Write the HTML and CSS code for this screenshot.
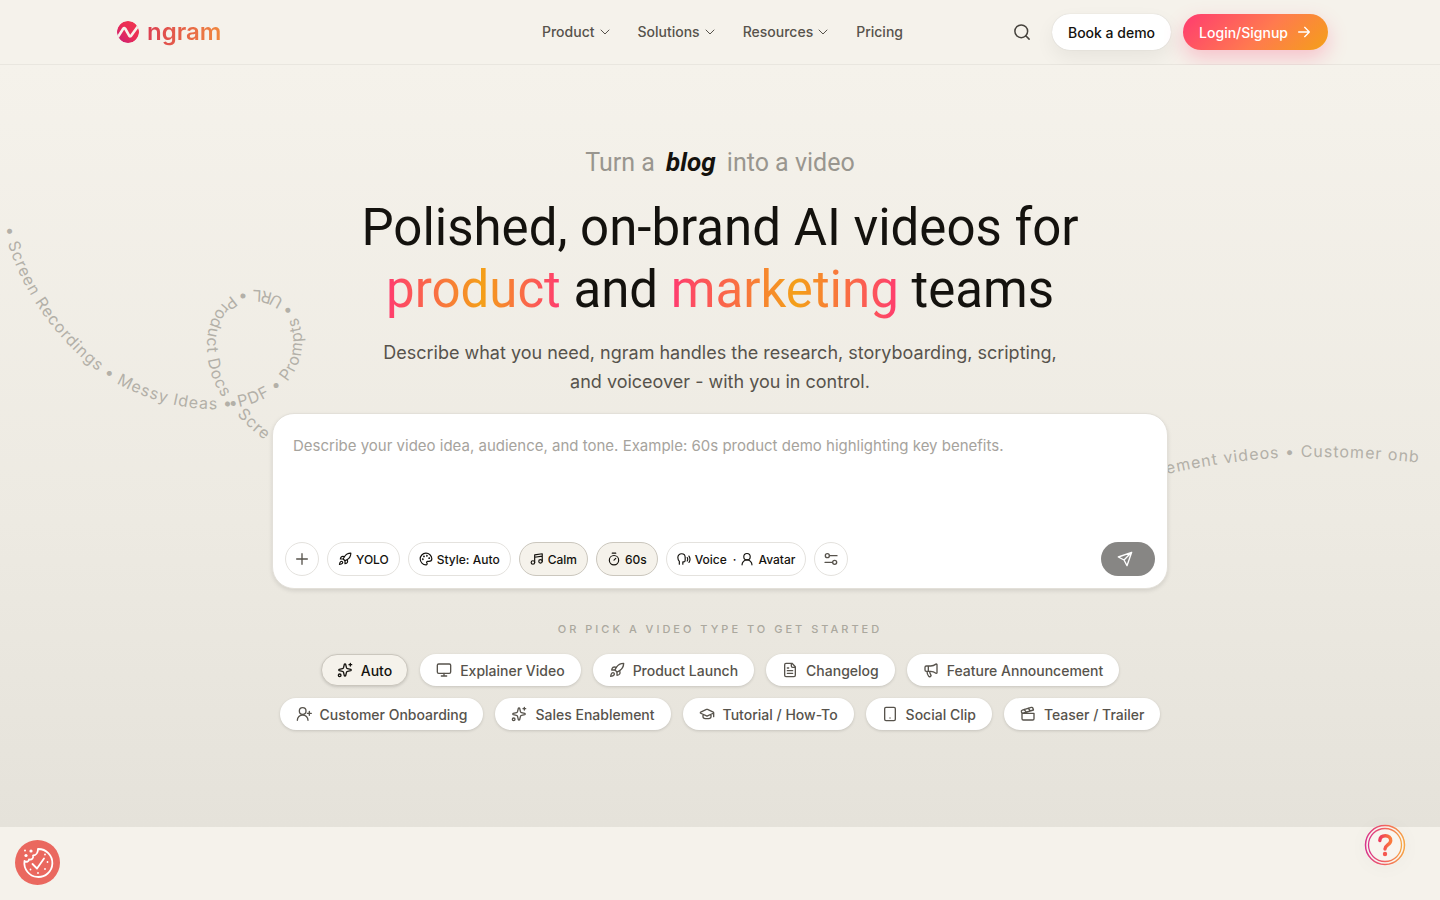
FILE: index.html
```html
<!DOCTYPE html>
<html lang="en">
<head>
<meta charset="utf-8">
<meta name="viewport" content="width=device-width, initial-scale=1">
<title>ngram</title>
<link rel="stylesheet" href="styles.css">
</head>
<body>
<svg class="defs" aria-hidden="true">
  <defs>
    <linearGradient id="logo-fill" x1="0" y1="1" x2="1" y2="0"><stop offset="0" stop-color="#c81e78"/><stop offset=".5" stop-color="#ea2c56"/><stop offset="1" stop-color="#f0384e"/></linearGradient>
    <linearGradient id="help-fill"><stop offset="0" stop-color="#d8358c"/><stop offset=".5" stop-color="#f2625f"/><stop offset="1" stop-color="#f6a445"/></linearGradient>
    <linearGradient id="mark-fill"><stop offset="0" stop-color="#ee3c5c"/><stop offset="1" stop-color="#fb7a3c"/></linearGradient>
  </defs>
  <symbol id="chevron" viewBox="0 0 24 24"><path d="m4 8 8 8 8-8"/></symbol>
  <symbol id="search" viewBox="0 0 24 24"><circle cx="11" cy="11" r="8.5"/><path d="m21.500 21.500-4.500-4.500"/></symbol>
  <symbol id="arrow" viewBox="0 0 24 24"><path d="M4 12h16M13 5l7 7-7 7"/></symbol>
  <symbol id="plus" viewBox="0 0 24 24"><path d="M4 12h16M12 4v16"/></symbol>
  <symbol id="rocket" viewBox="0 0 24 24"><path d="M4.500 16.500c-1.500 1.260-2 5-2 5s3.740-.5 5-2c.71-.84.7-2.130-.09-2.910a2.180 2.180 0 0 0-2.910-.09z"/><path d="m12 15-3-3a22 22 0 0 1 2-3.950A12.880 12.880 0 0 1 22 2c0 2.720-.78 7.500-6 11a22.350 22.350 0 0 1-4 2z"/><path d="M9 12H4s.55-3.030 2-4c1.620-1.080 5 0 5 0M12 15v5s3.030-.55 4-2c1.080-1.620 0-5 0-5"/></symbol>
  <symbol id="palette" viewBox="0 0 24 24"><path d="M12 22a10 10 0 1 1 10-10.500c0 3-2.500 4.500-5 4.500h-2.250a1.750 1.750 0 0 0-1.400 2.800l.3.400a1.750 1.750 0 0 1-1.400 2.800z"/><circle cx="13.500" cy="6.500" r=".6"/><circle cx="17.500" cy="10.500" r=".6"/><circle cx="6.500" cy="12.500" r=".6"/><circle cx="8.500" cy="7.500" r=".6"/></symbol>
  <symbol id="music" viewBox="0 0 24 24"><path d="M8 18V5l13-2v13M8 9l13-2"/><circle cx="5" cy="18" r="3"/><circle cx="18" cy="16" r="3"/></symbol>
  <symbol id="timer" viewBox="0 0 24 24"><path d="M9 2h6M12 14l3-3"/><circle cx="12" cy="14" r="8"/></symbol>
  <symbol id="voice" viewBox="0 0 24 24"><path d="M4 21v-5c-1.500-1.500-2.500-4-2.500-6A6.500 6.500 0 0 1 8 3c4 0 6 3 6 6.500V14c0 2-.5 3-2.500 3H10v4M17.500 9.500a6 6 0 0 1 0 6M20.500 7a10 10 0 0 1 0 11"/></symbol>
  <symbol id="user" viewBox="0 0 24 24"><circle cx="12" cy="8" r="5.500"/><path d="M3.500 22a8.500 8.500 0 0 1 17 0"/></symbol>
  <symbol id="sliders" viewBox="0 0 24 24"><path d="M10 7h11M3 17h11"/><circle cx="6.500" cy="7" r="3"/><circle cx="17.500" cy="17" r="3"/></symbol>
  <symbol id="send" viewBox="0 0 24 24"><path d="M22 2 2 9l8.500 4.500L15 22zM22 2 10.500 13.500"/></symbol>
  <symbol id="sparkles" viewBox="0 0 24 24"><path d="M11 3.500c.3-.8 1.700-.8 2 0l1.200 5a2 2 0 0 0 1.500 1.400l5 1.200c.8.300.8 1.500 0 1.800l-5 1.200a2 2 0 0 0-1.500 1.400l-1.200 5c-.3.800-1.700.8-2 0l-1.200-5a2 2 0 0 0-1.500-1.400l-5-1.200c-.8-.3-.8-1.500 0-1.800l5-1.200a2 2 0 0 0 1.500-1.400zM20 2v4M22 4h-4"/><circle cx="4" cy="20" r="2"/></symbol>
  <symbol id="monitor" viewBox="0 0 24 24"><rect x="2" y="3" width="20" height="14" rx="2"/><path d="M8 21h8M12 17v4"/></symbol>
  <symbol id="file" viewBox="0 0 24 24"><path d="M15 2H6a2 2 0 0 0-2 2v16a2 2 0 0 0 2 2h12a2 2 0 0 0 2-2V7zM14 2v4a2 2 0 0 0 2 2h4M10 9H8M16 13H8M16 17H8"/></symbol>
  <symbol id="megaphone" viewBox="0 0 24 24"><path d="M11 6a13 13 0 0 0 8.400-2.800A1 1 0 0 1 21 4v12a1 1 0 0 1-1.600.8A13 13 0 0 0 11 14H5a2 2 0 0 1-2-2V8a2 2 0 0 1 2-2zM6 14a12 12 0 0 0 2.400 7.200 2 2 0 0 0 3.200-2.400A8 8 0 0 1 10 14M8 6v8"/></symbol>
  <symbol id="user-plus" viewBox="0 0 24 24"><circle cx="10" cy="7.500" r="5"/><path d="M2 21.500a8 8 0 0 1 16 0M20 8v6M23 11h-6"/></symbol>
  <symbol id="cap" viewBox="0 0 24 24"><path d="M21.400 10.900a1 1 0 0 0 0-1.800l-8.600-3.900a2 2 0 0 0-1.600 0L2.600 9.100a1 1 0 0 0 0 1.800l8.600 3.900a2 2 0 0 0 1.600 0zM22 10v6M6 12.500V16a6 3 0 0 0 12 0v-3.500"/></symbol>
  <symbol id="phone" viewBox="0 0 24 24"><rect x="4" y="2" width="16" height="20" rx="2"/><path d="M12 18h.01"/></symbol>
  <symbol id="clapper" viewBox="0 0 24 24"><path d="M20.200 6 3 11l-.9-2.400c-.3-1.100.3-2.200 1.300-2.500l13.500-4c1.100-.3 2.200.3 2.500 1.300zM6.200 5.300l3.100 3.900M12.400 3.400l3.100 4M3 11h18v8a2 2 0 0 1-2 2H5a2 2 0 0 1-2-2z"/></symbol>
</svg>

<header class="header">
  <div class="header-inner">
    <a class="logo" href="#">
      <svg class="logo-mark" viewBox="0 0 22 22" aria-hidden="true"><circle cx="11" cy="11" r="11" fill="url(#logo-fill)"/><path d="M-1 19 6.300 7.500Q7.300 6.300 8.300 7.800L12.300 14.800Q13.300 16 14.300 14.500L23 2.500" fill="none" stroke="#f5f2eb" stroke-width="2.600"/></svg>
      <span class="logo-word">ngram</span>
    </a>
    <nav class="nav" aria-label="Main">
      <button class="nav-item" type="button">Product <svg class="icon icon-xs"><use href="#chevron"/></svg></button>
      <button class="nav-item" type="button">Solutions <svg class="icon icon-xs"><use href="#chevron"/></svg></button>
      <button class="nav-item" type="button">Resources <svg class="icon icon-xs"><use href="#chevron"/></svg></button>
      <a class="nav-item" href="#">Pricing</a>
    </nav>
    <div class="actions">
      <button class="search" type="button" aria-label="Search"><svg class="icon icon-md"><use href="#search"/></svg></button>
      <a class="btn btn-light" href="#">Book a demo</a>
      <a class="btn btn-brand" href="#">Login/Signup <svg class="icon icon-sm"><use href="#arrow"/></svg></a>
    </div>
  </div>
</header>

<main>
  <section class="hero">
    <svg class="ribbons" viewBox="0 65 1440 762" preserveAspectRatio="xMidYMin slice" aria-hidden="true">
      <path id="ribbon-left" fill="none" d="M4 228C15 280 50 335 100 373C135 397 180 411 222 409C262 407 302 385 302 342C302 310 282 290 254 290C225 290 207 315 207 345C207 385 225 412 290 460"/>
      <path id="ribbon-right" fill="none" d="M1167 474C1220 462 1270 457 1310 457C1350 457 1390 459 1440 465"/>
      <text><textPath href="#ribbon-left">• Screen Recordings • Messy Ideas • PDF • Prompts • URL • Product Docs • Scre</textPath></text>
      <text><textPath href="#ribbon-right">ement videos • Customer onb</textPath></text>
    </svg>
    <div class="hero-inner">
      <p class="tagline">Turn a <em>blog</em> into a video</p>
      <h1 class="title">Polished, on-brand AI videos for <br><span class="grad">product</span> and <span class="grad">marketing</span> teams</h1>
      <p class="lead">Describe what you need, ngram handles the research, storyboarding, scripting, and voiceover - with you in control.</p>
      <form class="composer">
        <textarea class="prompt" aria-label="Video idea" placeholder="Describe your video idea, audience, and tone. Example: 60s product demo highlighting key benefits."></textarea>
        <div class="tools">
          <button class="tool tool-round" type="button" aria-label="Add"><svg class="icon icon-sm"><use href="#plus"/></svg></button>
          <button class="tool" type="button"><svg class="icon icon-xs2"><use href="#rocket"/></svg>YOLO</button>
          <button class="tool" type="button"><svg class="icon icon-xs2"><use href="#palette"/></svg>Style: Auto</button>
          <button class="tool tool-on" type="button"><svg class="icon icon-xs2"><use href="#music"/></svg>Calm</button>
          <button class="tool tool-on" type="button"><svg class="icon icon-xs2"><use href="#timer"/></svg>60s</button>
          <button class="tool" type="button"><svg class="icon icon-xs2"><use href="#voice"/></svg>Voice <span class="dot">·</span><svg class="icon icon-xs2"><use href="#user"/></svg>Avatar</button>
          <button class="tool tool-round" type="button" aria-label="Settings"><svg class="icon icon-sm"><use href="#sliders"/></svg></button>
          <button class="send" type="submit" aria-label="Send"><svg class="icon icon-sm"><use href="#send"/></svg></button>
        </div>
      </form>
      <p class="pick">OR PICK A VIDEO TYPE TO GET STARTED</p>
      <div class="types">
        <button class="type type-on" type="button"><svg class="icon icon-sm"><use href="#sparkles"/></svg>Auto</button>
        <button class="type" type="button"><svg class="icon icon-sm"><use href="#monitor"/></svg>Explainer Video</button>
        <button class="type" type="button"><svg class="icon icon-sm"><use href="#rocket"/></svg>Product Launch</button>
        <button class="type" type="button"><svg class="icon icon-sm"><use href="#file"/></svg>Changelog</button>
        <button class="type" type="button"><svg class="icon icon-sm"><use href="#megaphone"/></svg>Feature Announcement</button>
        <button class="type" type="button"><svg class="icon icon-sm"><use href="#user-plus"/></svg>Customer Onboarding</button>
        <button class="type" type="button"><svg class="icon icon-sm"><use href="#sparkles"/></svg>Sales Enablement</button>
        <button class="type" type="button"><svg class="icon icon-sm"><use href="#cap"/></svg>Tutorial / How-To</button>
        <button class="type" type="button"><svg class="icon icon-sm"><use href="#phone"/></svg>Social Clip</button>
        <button class="type" type="button"><svg class="icon icon-sm"><use href="#clapper"/></svg>Teaser / Trailer</button>
      </div>
    </div>
  </section>
</main>

<button class="cookie" type="button" aria-label="Cookie settings">
  <svg viewBox="0 0 45 45" aria-hidden="true"><circle cx="22.500" cy="22.500" r="22.500" fill="#ea685f"/><g fill="none" stroke="#fff" stroke-width="1.800" stroke-linecap="round" stroke-linejoin="round"><path d="M23 9a14 14 0 1 1-13.500 12c2 1.500 4.500.5 4.500-1.500 3 .5 5-1.500 4-4 3 0 5-3 5-6.500z"/><path d="m17.500 24 4.500 4.500 7-10"/><path d="M30 14.500v.1M32.500 22v.1M30 29v.1M23 33v.1M15.500 29.500v.1"/></g><g fill="#fff"><circle cx="11" cy="15.500" r="1.600"/><circle cx="16" cy="11" r="1.600"/><circle cx="10" cy="10.500" r="1"/></g></svg>
</button>
<button class="help" type="button" aria-label="Help">
  <svg viewBox="0 0 42 42" aria-hidden="true"><circle cx="21" cy="21" r="19.500" fill="#f8f5ef" stroke="url(#help-fill)" stroke-width="1.500"/><circle cx="21" cy="21" r="16.500" fill="none" stroke="url(#help-fill)" stroke-width="1.300"/><path d="M15.800 16.500c.3-3.300 2.700-4.700 5.600-4.700 3.200 0 5.300 2 5.300 4.600 0 4.400-5.700 4.600-5.700 8.600" fill="none" stroke="url(#mark-fill)" stroke-width="3.400" stroke-linecap="round"/><circle cx="21" cy="30" r="2.200" fill="#f5584f"/></svg>
</button>
</body>
</html>
```
FILE: styles.css
```css
*, *::before, *::after { box-sizing: border-box; }
body {
  margin: 0;
  min-height: 100vh;
  background: #f5f2eb;
  color: #14120e;
  font-family: Inter, "Liberation Sans", sans-serif;
  font-size: 14px;
}
button, textarea { font: inherit; color: inherit; }
button { border: 0; padding: 0; background: none; cursor: pointer; }
a { color: inherit; text-decoration: none; }
p, h1 { margin: 0; }
.defs { position: absolute; width: 0; height: 0; }

.icon {
  flex: none;
  fill: none;
  stroke: currentColor;
  stroke-width: 2;
  stroke-linecap: round;
  stroke-linejoin: round;
}
.icon-xs { width: 12px; height: 12px; }
.icon-xs2 { width: 14px; height: 14px; }
.icon-sm { width: 16px; height: 16px; }
.icon-md { width: 18px; height: 18px; }

.header { border-bottom: 1px solid #e9e6df; }
.header-inner {
  display: grid;
  grid-template-columns: 1fr auto 1fr;
  align-items: center;
  max-width: 1216px;
  height: 64px;
  margin: 0 auto;
  padding-left: 5px;
}
.logo { display: flex; align-items: center; gap: 8px; }
.logo-mark { width: 22px; height: 22px; border-radius: 50%; }
.logo-word {
  background: linear-gradient(90deg, #dc3f51, #f0883e);
  background-clip: text;
  -webkit-background-clip: text;
  color: transparent;
  font-size: 24px;
  font-weight: 600;
  line-height: 30px;
}
.nav { display: flex; gap: 27px; color: #57534c; }
.nav-item { display: flex; align-items: center; gap: 4px; font-weight: 500; line-height: 20px; }
.actions { display: flex; align-items: center; justify-content: flex-end; gap: 12px; }
.search { display: grid; place-items: center; width: 36px; height: 36px; color: #45423c; }
.btn {
  display: flex;
  align-items: center;
  gap: 8px;
  height: 36px;
  padding: 0 16px;
  border-radius: 18px;
  font-weight: 500;
  white-space: nowrap;
}
.btn-light { background: #fff; box-shadow: 0 0 1px #0003, 0 8px 20px #0000000f; }
.btn-brand {
  background: linear-gradient(135deg, #ff3b70, #ff7a4f 55%, #f4a018);
  box-shadow: 0 8px 20px #ff3b7044;
  color: #fff;
}

.hero {
  position: relative;
  overflow: hidden;
  padding: 82px 24px 97px;
  background: linear-gradient(#f5f2eb, #edeae2 60%, #e5e2da);
}
.ribbons { position: absolute; inset: 0; width: 100%; height: 100%; }
.ribbons text { fill: #b3b0a8; font-size: 16px; letter-spacing: 1px; }
.hero-inner {
  position: relative;
  display: flex;
  flex-direction: column;
  align-items: center;
  text-align: center;
}
.tagline { color: #99968f; font-family: Roboto, Inter, sans-serif; font-size: 25px; line-height: 32px; }
.tagline em { margin: 0 5px; color: #14120e; font-size: 26px; font-weight: 700; line-height: 1; }
.title {
  margin-top: 18px;
  font-family: Roboto, Inter, sans-serif;
  font-size: 51px;
  font-weight: 400;
  line-height: 62px;
}
.grad {
  background: linear-gradient(90deg, #ff3b70, #f4a018 55%, #ff3b70);
  background-clip: text;
  -webkit-background-clip: text;
  color: transparent;
}
.lead { max-width: 700px; margin-top: 17px; color: #57534c; font-size: 18px; line-height: 29px; }

.composer {
  width: 100%;
  max-width: 896px;
  margin-top: 17px;
  padding: 12px;
  border: 1px solid #e3e0d9;
  border-radius: 22px;
  background: #fff;
  box-shadow: 0 2px 4px #0000001a;
}
.prompt {
  display: block;
  width: 100%;
  height: 116px;
  padding: 8px;
  border: 0;
  outline: 0;
  resize: none;
  background: none;
  font-size: 15px;
  line-height: 24px;
}
.prompt::placeholder { color: #a6a39d; opacity: 1; }
.tools { display: flex; flex-wrap: wrap; align-items: center; gap: 8px; }
.tool {
  display: flex;
  align-items: center;
  justify-content: center;
  gap: 4px;
  height: 34px;
  padding: 0 10px;
  border: 1px solid #e4e2de;
  border-radius: 17px;
  background: #fff;
  font-size: 12px;
  font-weight: 500;
}
.tool-round { width: 34px; padding: 0; color: #57534c; }
.tool-on { border-color: #cbc7be; background: #f5f2eb; }
.dot { margin-left: 2px; }
.send {
  display: grid;
  place-items: center;
  width: 54px;
  height: 34px;
  margin-left: auto;
  padding-right: 6px;
  border-radius: 17px;
  background: #878684;
  color: #fff;
}

.pick { margin-top: 31px; color: #aba89e; font-size: 11px; font-weight: 500; line-height: 18px; letter-spacing: 3px; }
.types {
  display: flex;
  flex-wrap: wrap;
  justify-content: center;
  gap: 12px;
  max-width: 960px;
  margin-top: 16px;
}
.type {
  display: flex;
  align-items: center;
  gap: 8px;
  height: 32px;
  padding: 0 15px;
  border: 1px solid transparent;
  border-radius: 16px;
  background: #fff;
  box-shadow: 0 1px 3px #00000026;
  color: #57534c;
  font-weight: 500;
}
.type-on { border-color: #cbc7be; background: #f5f2eb; color: #14120e; }

.cookie, .help { position: fixed; display: block; border-radius: 50%; }
.cookie { left: 15px; bottom: 15px; width: 45px; height: 45px; }
.help { right: 34px; bottom: 34px; width: 42px; height: 42px; box-shadow: 0 2px 20px #00000008; }
.cookie svg, .help svg { display: block; width: 100%; height: 100%; }
```
